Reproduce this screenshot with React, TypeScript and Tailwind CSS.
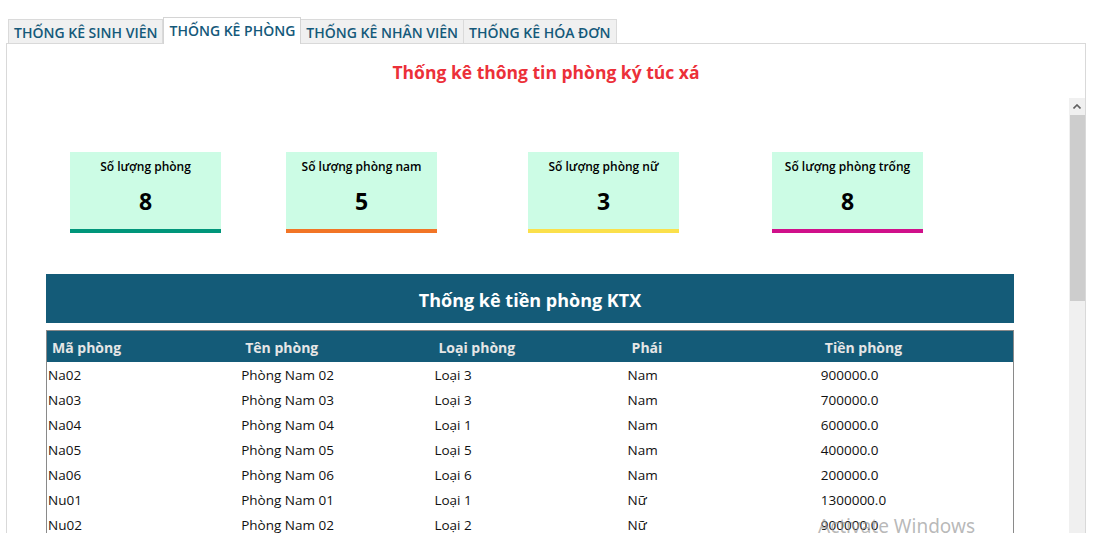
import React from 'react'

const tabs = [
  { label: 'THỐNG KÊ SINH VIÊN', active: false },
  { label: 'THỐNG KÊ PHÒNG', active: true },
  { label: 'THỐNG KÊ NHÂN VIÊN', active: false },
  { label: 'THỐNG KÊ HÓA ĐƠN', active: false },
]

const cards = [
  { label: 'Số lượng phòng', value: '8', bar: 'border-[#00967a]', ml: 'ml-[63px]' },
  { label: 'Số lượng phòng nam', value: '5', bar: 'border-[#f27526]', ml: 'ml-[65px]' },
  { label: 'Số lượng phòng nữ', value: '3', bar: 'border-[#fbe04b]', ml: 'ml-[91px]' },
  { label: 'Số lượng phòng trống', value: '8', bar: 'border-[#d0108a]', ml: 'ml-[93px]' },
]

const rows = [
  ['Na02', 'Phòng Nam 02', 'Loại 3', 'Nam', '900000.0'],
  ['Na03', 'Phòng Nam 03', 'Loại 3', 'Nam', '700000.0'],
  ['Na04', 'Phòng Nam 04', 'Loại 1', 'Nam', '600000.0'],
  ['Na05', 'Phòng Nam 05', 'Loại 5', 'Nam', '400000.0'],
  ['Na06', 'Phòng Nam 06', 'Loại 6', 'Nam', '200000.0'],
  ['Nu01', 'Phòng Nam 01', 'Loại 1', 'Nữ', '1300000.0'],
  ['Nu02', 'Phòng Nam 02', 'Loại 2', 'Nữ', '900000.0'],
]

const headers = ['Mã phòng', 'Tên phòng', 'Loại phòng', 'Phái', 'Tiền phòng']

export default function App() {
  return (
    <div className="relative w-[1102px] h-[533px] overflow-hidden bg-white font-['Open_Sans','Noto_Sans',sans-serif]">
      {/* Tabs */}
      <div className="flex items-end pl-[8px] pt-[17px]">
        {tabs.map((t) =>
          t.active ? (
            <div
              key={t.label}
              className="relative z-10 -mb-px h-[27px] px-[5px] pt-[2px] bg-white border border-[#d4d4d4] border-b-0 text-[14px] font-semibold text-[#14597a] leading-[22px]"
            >
              {t.label}
            </div>
          ) : (
            <div
              key={t.label}
              className="h-[24px] px-[5px] pt-[2px] bg-[#f0f0f0] border border-[#dadada] border-b-0 -ml-px first:ml-0 text-[14px] font-semibold text-[#14597a] leading-[22px]"
            >
              {t.label}
            </div>
          ),
        )}
      </div>

      {/* Panel */}
      <div className="ml-[6px] w-[1080px] h-[490px] border border-[#d9d9d9] border-b-0 flex flex-col">
        <div className="h-[54px] flex justify-center pt-[15px]">
          <h1 className="text-[17.5px] font-bold text-[#ec3039] leading-[26px]">Thống kê thông tin phòng ký túc xá</h1>
        </div>

        <div className="flex flex-1 min-h-0">
          <div className="flex-1 min-w-0">
            {/* Summary cards */}
            <div className="flex pt-[54px]">
              {cards.map((c) => (
                <div
                  key={c.label}
                  className={`${c.ml} w-[151px] h-[81px] bg-[#ccfce5] border-b-4 ${c.bar} flex flex-col items-center`}
                >
                  <div className="mt-[6px] text-[12px] font-semibold text-black leading-[18px]">{c.label}</div>
                  <div className="mt-[10px] text-[23px] font-bold text-black leading-[30px]">{c.value}</div>
                </div>
              ))}
            </div>

            {/* Header bar */}
            <div className="ml-[39px] mt-[41px] w-[968px] h-[49px] bg-[#145b78] flex items-center justify-center">
              <span className="mt-[3px] text-[18px] font-bold text-white">Thống kê tiền phòng KTX</span>
            </div>

            {/* Table */}
            <div className="ml-[39px] mt-[7px] w-[968px] border border-[#8a8a8a] border-b-0">
              <div className="grid grid-cols-5 h-[31px] bg-[#145b78] items-center">
                {headers.map((h) => (
                  <div key={h} className="pl-[5px] pt-[2px] text-[14px] font-bold text-[#e6e6e6]">
                    {h}
                  </div>
                ))}
              </div>
              <div className="pt-[1px]">
                {rows.map((r, i) => (
                  <div key={i} className="grid grid-cols-5 h-[25px] items-center">
                    {r.map((cell, j) => (
                      <div key={j} className="pl-[1px] text-[13.5px] text-[#111] leading-[25px]">
                        {cell}
                      </div>
                    ))}
                  </div>
                ))}
              </div>
            </div>
          </div>

          {/* Scrollbar */}
          <div className="w-[16px] bg-[#f0f0f0] flex flex-col items-center">
            <div className="h-[17px] w-full flex items-center justify-center">
              <svg width="8" height="5" viewBox="0 0 8 5">
                <path d="M0.5 4.5 L4 1 L7.5 4.5" fill="none" stroke="#606060" strokeWidth="1.6" />
              </svg>
            </div>
            <div className="w-[15px] h-[186px] bg-[#cdcdcd]" />
          </div>
        </div>
      </div>

      {/* Watermark */}
      <div className="absolute left-[818px] top-[512px] text-[19px] text-[#9a9a9a]/70 font-['Noto_Sans',sans-serif] leading-[28px] pointer-events-none">
        Activate Windows
      </div>
    </div>
  )
}
